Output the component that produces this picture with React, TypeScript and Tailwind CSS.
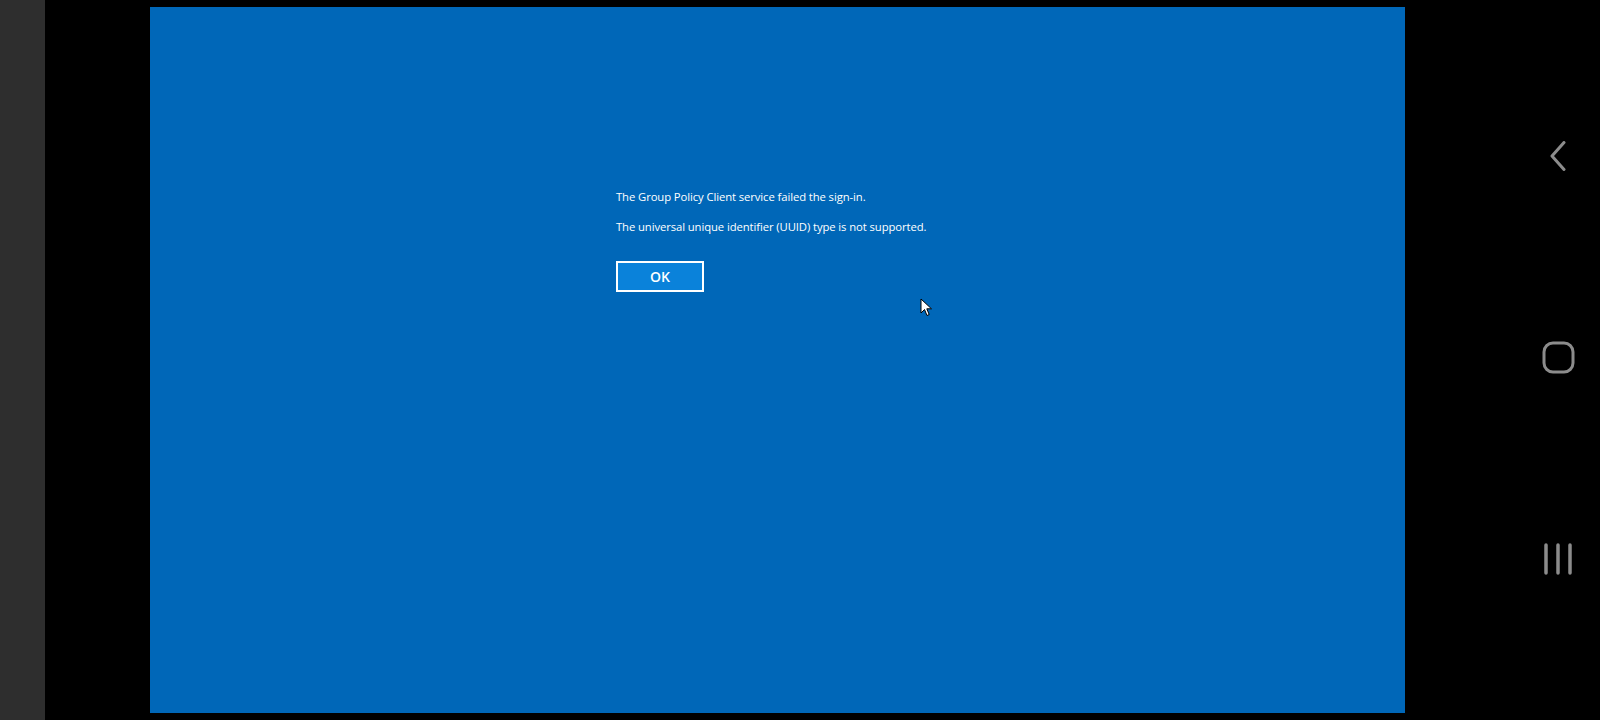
export default function App() {
  return (
    <div className="flex h-[720px] w-[1600px] overflow-hidden bg-black">
      <div className="w-[45px] shrink-0 bg-[#2e2e2e]" />
      <div className="w-[105px] shrink-0" />
      <div className="mt-[7px] h-[706px] w-[1255px] shrink-0 bg-[#0067b8] relative">
        <div className="pl-[466px] pt-[182px] font-['Open_Sans',sans-serif] text-[11.3px] text-white leading-[16px]">
          <p className="tracking-[-0.1px]">The Group Policy Client service failed the sign-in.</p>
          <p className="mt-[14px] tracking-[-0.1px]">The universal unique identifier (UUID) type is not supported.</p>
          <button className="mt-[26px] flex h-[31px] w-[88px] items-center justify-center border-2 border-white bg-[#0a82da] text-[14px] font-semibold text-white">
            OK
          </button>
        </div>
        <svg className="absolute left-[770px] top-[291px]" width="13" height="19" viewBox="0 0 13 19">
          <path d="M1 1 L1 15 L4.5 11.5 L7 17.5 L9.2 16.5 L6.8 10.8 L11.5 10.8 Z" fill="white" stroke="black" strokeWidth="1" strokeLinejoin="round" />
        </svg>
      </div>
      <div className="flex-1">
        <div className="ml-[137px] flex w-[32px] flex-col items-center text-[#8c8c8c]">
          <svg className="mt-[141px]" width="20" height="30" viewBox="0 0 20 30">
            <path d="M16 1.5 L4 15 L16 28.5" fill="none" stroke="currentColor" strokeWidth="3" strokeLinecap="round" strokeLinejoin="round" />
          </svg>
          <svg className="mt-[170px]" width="33" height="33" viewBox="0 0 33 33">
            <rect x="2" y="2" width="29" height="29" rx="9" fill="none" stroke="currentColor" strokeWidth="3" />
          </svg>
          <svg className="mt-[169px]" width="30" height="32" viewBox="0 0 30 32">
            <line x1="3" y1="2" x2="3" y2="30" stroke="currentColor" strokeWidth="3.5" strokeLinecap="round" />
            <line x1="15" y1="2" x2="15" y2="30" stroke="currentColor" strokeWidth="3.5" strokeLinecap="round" />
            <line x1="27" y1="2" x2="27" y2="30" stroke="currentColor" strokeWidth="3.5" strokeLinecap="round" />
          </svg>
        </div>
      </div>
    </div>
  )
}
